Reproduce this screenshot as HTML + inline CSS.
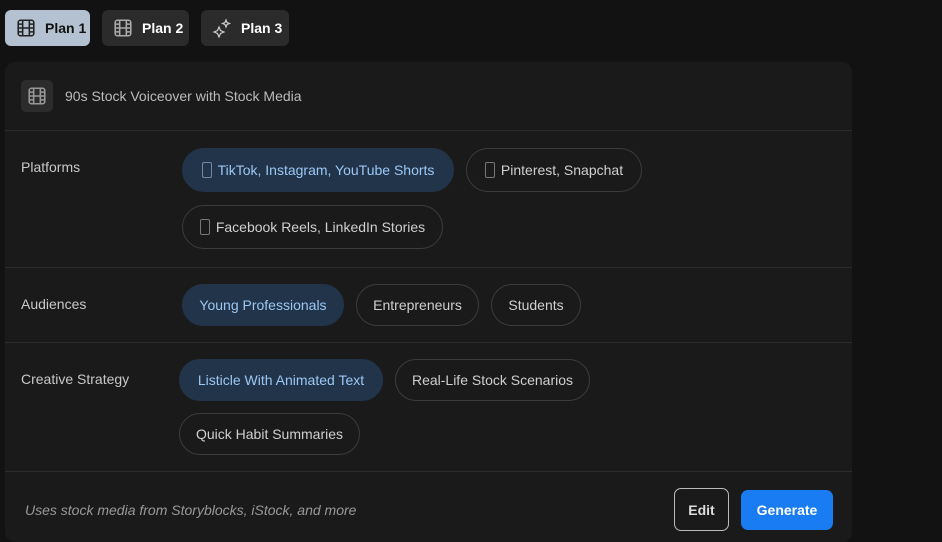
<!DOCTYPE html>
<html><head><style>
*{box-sizing:border-box;margin:0;padding:0}
body{width:942px;height:536px;background:#121212;font-family:"Liberation Sans",sans-serif;overflow:hidden;position:relative;color:#ccc}
.tab{position:absolute;top:10px;height:36px;border-radius:6px;background:#2b2b2b;color:#fff;font-weight:bold;font-size:14px;display:flex;align-items:center;padding-left:11px;gap:9px}
.tab.on{background:#b4c1d0;color:#111}
.card{position:absolute;left:5px;top:62px;width:847px;height:480px;background:#1a1a1a;border-radius:10px}
.sep{position:absolute;left:5px;width:847px;height:1px;background:#2c2c2c}
.lbl{position:absolute;left:21px;font-size:14px;color:#c8c8c8}
.pill{position:absolute;height:44px;border-radius:22px;border:1px solid #3c3c3c;font-size:14px;color:#cfcfcf;display:flex;align-items:center;justify-content:center;gap:6px}
.pill.on{background:#223449;border-color:#223449;color:#9cc7f5}
.ph{width:10px;height:16px;border:1.5px solid #777;border-radius:2px}
.on .ph{border-color:#6f8aa8}
</style></head><body>
<div class="tab on" style="left:5px;width:85px"><svg width="20" height="20" viewBox="0 0 18 18" fill="none" stroke="#222" stroke-width="1.4"><rect x="2" y="2" width="14" height="14" rx="2"/><path d="M6 2v14M12 2v14M2 9h14M2 5.5h4M2 12.5h4M12 5.5h4M12 12.5h4"/></svg>Plan 1</div>
<div class="tab" style="left:102px;width:87px"><svg width="20" height="20" viewBox="0 0 18 18" fill="none" stroke="#aaa" stroke-width="1.4"><rect x="2" y="2" width="14" height="14" rx="2"/><path d="M6 2v14M12 2v14M2 9h14M2 5.5h4M2 12.5h4M12 5.5h4M12 12.5h4"/></svg>Plan 2</div>
<div class="tab" style="left:201px;width:88px"><svg width="20" height="20" viewBox="0 0 20 20" fill="none" stroke="#ccc" stroke-width="1.2"><path d="M7 9l1.5 3.5L12 14l-3.5 1.5L7 19l-1.5-3.5L2 14l3.5-1.5zM14 2l1 2.5 2.5 1-2.5 1-1 2.5-1-2.5-2.5-1 2.5-1z"/></svg>Plan 3</div>
<div class="card"></div>
<div style="position:absolute;left:21px;top:80px;width:32px;height:32px;border-radius:5px;background:#2c2c2c;display:flex;align-items:center;justify-content:center"><svg width="20" height="20" viewBox="0 0 18 18" fill="none" stroke="#999" stroke-width="1.4"><rect x="2" y="2" width="14" height="14" rx="2"/><path d="M6 2v14M12 2v14M2 9h14M2 5.5h4M2 12.5h4M12 5.5h4M12 12.5h4"/></svg></div>
<div style="position:absolute;left:65px;top:88px;font-size:14px;color:#bbb">90s Stock Voiceover with Stock Media</div>
<div class="sep" style="top:130px"></div>
<div class="sep" style="top:267px"></div>
<div class="sep" style="top:342px"></div>
<div class="sep" style="top:471px"></div>
<div class="lbl" style="top:159px">Platforms</div>
<div class="lbl" style="top:296px">Audiences</div>
<div class="lbl" style="top:371px">Creative Strategy</div>
<div class="pill on" style="left:182px;top:148px;width:272px"><span class="ph"></span>TikTok, Instagram, YouTube Shorts</div>
<div class="pill" style="left:466px;top:148px;width:176px"><span class="ph"></span>Pinterest, Snapchat</div>
<div class="pill" style="left:182px;top:205px;width:261px"><span class="ph"></span>Facebook Reels, LinkedIn Stories</div>
<div class="pill on" style="left:182px;top:284px;width:162px;height:42px">Young Professionals</div>
<div class="pill" style="left:356px;top:284px;width:123px;height:42px">Entrepreneurs</div>
<div class="pill" style="left:491px;top:284px;width:90px;height:42px">Students</div>
<div class="pill on" style="left:179px;top:359px;width:204px;height:42px">Listicle With Animated Text</div>
<div class="pill" style="left:395px;top:359px;width:195px;height:42px">Real-Life Stock Scenarios</div>
<div class="pill" style="left:179px;top:413px;width:181px;height:42px">Quick Habit Summaries</div>
<div style="position:absolute;left:25px;top:502px;font-size:14px;font-style:italic;color:#999">Uses stock media from Storyblocks, iStock, and more</div>
<div style="position:absolute;left:674px;top:488px;width:55px;height:43px;border:1px solid #bbb;border-radius:7px;color:#ddd;font-size:14px;font-weight:bold;display:flex;align-items:center;justify-content:center">Edit</div>
<div style="position:absolute;left:741px;top:490px;width:92px;height:40px;background:#1a7cf2;border-radius:7px;color:#fff;font-size:14px;font-weight:bold;display:flex;align-items:center;justify-content:center">Generate</div>
</body></html>
